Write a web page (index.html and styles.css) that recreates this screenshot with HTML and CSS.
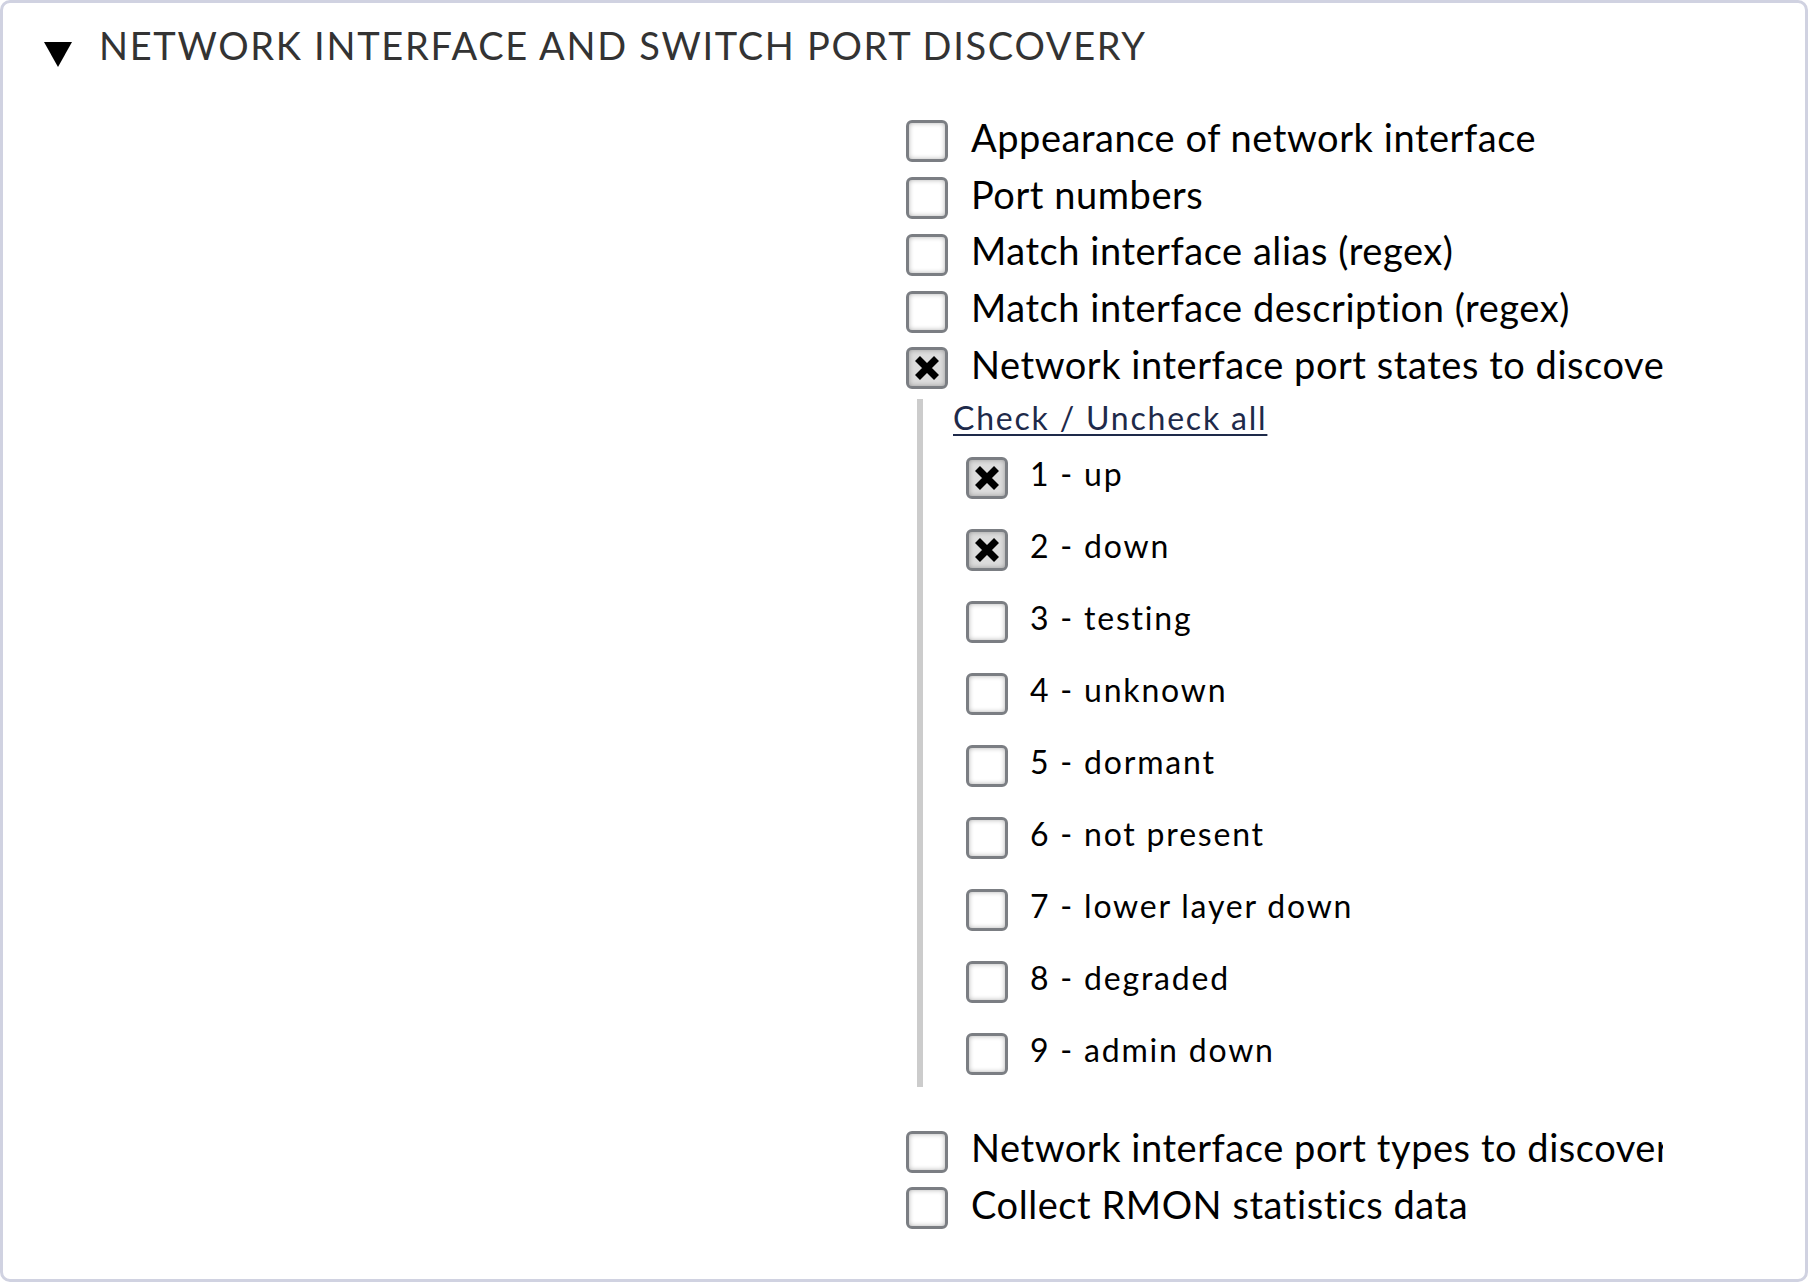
FILE: index.html
```html
<!DOCTYPE html>
<html>
<head>
<meta charset="utf-8">
<link rel="stylesheet" href="styles.css">
</head>
<body>
<div class="page">
  <div class="heading">
    <svg class="tri" viewBox="0 0 28 25" width="28" height="25"><polygon points="0,0 28,0 14,25" fill="#000"/></svg>
    <span class="title">Network interface and switch port discovery</span>
  </div>
  <div class="form">
    <div class="legend"></div>
    <div class="content">
      <div class="row"><span class="cb"></span><span class="lbl">Appearance of network interface</span></div>
      <div class="row"><span class="cb"></span><span class="lbl">Port numbers</span></div>
      <div class="row"><span class="cb"></span><span class="lbl">Match interface alias (regex)</span></div>
      <div class="row"><span class="cb"></span><span class="lbl">Match interface description (regex)</span></div>
      <div class="row"><span class="cb checked"><svg viewBox="0 0 24 24" width="24" height="24"><path d="M2.5 2.5 L21.5 21.5 M21.5 2.5 L2.5 21.5" stroke="#000" stroke-width="7"/></svg></span><span class="lbl">Network interface port states to discover</span></div>
      <div class="sub">
        <a class="toggle" href="#">Check / Uncheck all</a>
        <div class="srow"><span class="cb checked"><svg viewBox="0 0 24 24" width="24" height="24"><path d="M2.5 2.5 L21.5 21.5 M21.5 2.5 L2.5 21.5" stroke="#000" stroke-width="7"/></svg></span><span class="lbl">1 - up</span></div>
        <div class="srow"><span class="cb checked"><svg viewBox="0 0 24 24" width="24" height="24"><path d="M2.5 2.5 L21.5 21.5 M21.5 2.5 L2.5 21.5" stroke="#000" stroke-width="7"/></svg></span><span class="lbl">2 - down</span></div>
        <div class="srow"><span class="cb"></span><span class="lbl">3 - testing</span></div>
        <div class="srow"><span class="cb"></span><span class="lbl">4 - unknown</span></div>
        <div class="srow"><span class="cb"></span><span class="lbl">5 - dormant</span></div>
        <div class="srow"><span class="cb"></span><span class="lbl">6 - not present</span></div>
        <div class="srow"><span class="cb"></span><span class="lbl">7 - lower layer down</span></div>
        <div class="srow"><span class="cb"></span><span class="lbl">8 - degraded</span></div>
        <div class="srow"><span class="cb"></span><span class="lbl">9 - admin down</span></div>
      </div>
      <div class="row after"><span class="cb"></span><span class="lbl">Network interface port types to discover</span></div>
      <div class="row"><span class="cb"></span><span class="lbl">Collect RMON statistics data</span></div>
    </div>
  </div>
</div>
</body>
</html>
```
FILE: styles.css
```css
html, body {
  margin: 0;
  padding: 0;
  background: #fff;
}
body {
  font-family: Lato, "Open Sans", sans-serif;
  color: #000;
}
.page {
  box-sizing: border-box;
  width: 1808px;
  height: 1282px;
  border: 3px solid #d0d2e1;
  border-radius: 10px;
  overflow: hidden;
}
.heading {
  display: flex;
  align-items: center;
  height: 80px;
  padding-left: 41px;
  padding-top: 2px;
}
.tri {
  flex: none;
  margin-top: 19px;
  margin-right: 27px;
}
.title {
  font-size: 38px;
  text-transform: uppercase;
  letter-spacing: 1.7px;
  color: #333;
}
.form {
  display: grid;
  grid-template-columns: 903px 757px;
  padding-top: 28px;
}
.content {
  overflow: hidden;
  white-space: nowrap;
}
.row {
  display: flex;
  align-items: center;
  height: 56.75px;
}
.row.after {
  margin-top: 36.6px;
}
.row .lbl {
  font-size: 38px;
  letter-spacing: 0.55px;
  margin-top: -9px;
  margin-left: 23px;
}
.cb {
  box-sizing: border-box;
  flex: none;
  width: 42px;
  height: 42px;
  border: 3px solid #7b7e83;
  border-radius: 6px;
  background: #fff;
  box-shadow: inset 0 0 5px rgba(0, 0, 0, 0.3);
  display: flex;
  align-items: center;
  justify-content: center;
}
.cb.checked {
  background: #dcdcdc;
}
.sub {
  margin-left: 11px;
  margin-top: 2px;
  border-left: 6px solid #cccccc;
  padding-left: 30px;
  padding-top: 3.6px;
  padding-bottom: 12px;
}
.toggle {
  display: block;
  font-size: 32px;
  letter-spacing: 1.8px;
  color: #1e2a4a;
  text-decoration: underline;
  text-decoration-thickness: 2px;
  text-underline-offset: 4px;
  line-height: 32px;
}
.srow {
  display: flex;
  align-items: center;
  height: 42px;
  margin-top: 30px;
  padding-left: 13px;
}
.toggle + .srow {
  margin-top: 22.4px;
}
.srow .lbl {
  font-size: 32px;
  letter-spacing: 1.8px;
  margin-top: -8.8px;
  margin-left: 22px;
}
```
